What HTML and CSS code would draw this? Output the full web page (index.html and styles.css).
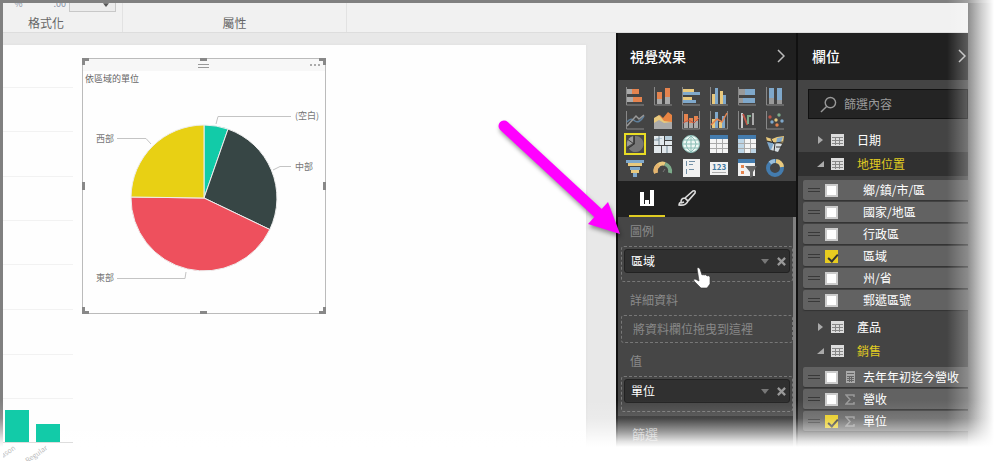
FILE: index.html
```html
<!DOCTYPE html>
<html lang="zh-Hant">
<head>
<meta charset="utf-8">
<title>視覺效果</title>
<link rel="stylesheet" href="styles.css">
</head>
<body>
<div class="window">
  <div class="app">
    <header class="ribbon">
      <section class="group group-format">
        <div class="tools"><span>%</span><span>.00</span><span class="spinner"><svg viewBox="0 0 8 6" width="6" height="5"><path d="M0 0h8L4 5z" fill="#555"/></svg></span></div>
        <div class="caption">格式化</div>
      </section>
      <section class="group group-props">
        <div class="caption">屬性</div>
      </section>
    </header>
    <div class="body">
      <main class="canvas">
        <div class="page">
          <svg class="bars" viewBox="0 0 72 416" width="72" height="416">
            <g stroke="#f2f2f2"><path d="M0 42.500H70M0 86.500H70M0 131.500H70M0 175.500H70M0 219.500H70M0 264.500H70M0 309.500H70M0 353.500H70"/></g>
            <path d="M0 397.500H70" stroke="#ddd"/>
            <path d="M2 365h24v32H2zM33 379h24v18H33z" fill="#12cba8"/>
            <g font-size="7" fill="#bbb" text-anchor="end"><text transform="translate(13 404) rotate(-35)">ason</text><text transform="translate(45 404) rotate(-35)">Regular</text></g>
          </svg>
          <article class="visual">
            <div class="visual-bar"><i class="grip"></i><button class="more" aria-label="更多選項"><svg viewBox="0 0 11 2" width="11" height="2"><path d="M0 0h2v2H0zM4 0h2v2H4zM8 0h2v2H8z" fill="#aaa"/></svg></button></div>
            <h2>依區域的單位</h2>
            <svg class="pie" viewBox="0 0 242 228" width="242" height="228">
              <g stroke="#eee" stroke-width="1">
                <path d="M121 113V40A73 73 0 0 1 145 44.100Z" fill="#12cba8"/>
                <path d="M121 113L145 44.100A73 73 0 0 1 186.800 144.500Z" fill="#374645"/>
                <path d="M121 113L186.800 144.500A73 73 0 0 1 48 112Z" fill="#ee505d"/>
                <path d="M121 113L48 112A73 73 0 0 1 121 40Z" fill="#e8d014"/>
              </g>
              <g fill="none" stroke="#c4c4c4"><path d="M133 39L135 31.500H208M190 85L197 81.500H208M34 53.500H63L68 59M34 193.500H102L103 187"/></g>
              <g font-size="9" fill="#777"><text x="212" y="34">(空白)</text><text x="212" y="85">中部</text><text x="13" y="57">西部</text><text x="13" y="196">東部</text></g>
            </svg>
            <svg class="handles" viewBox="0 0 244 256" preserveAspectRatio="none"><path fill="none" stroke="#888" stroke-width="3" d="M1.500 7V1.500H7M237 1.500h5.500V7M1.500 249v5.500H7M237 254.500h5.500V249M118 1.500h7M118 254.500h7M1.500 124v8M242.500 124v8"/></svg>
          </article>
        </div>
      </main>

      <aside class="pane viz">
        <div class="pane-head"><h1>視覺效果</h1><button aria-label="摺疊"><svg viewBox="0 0 8 14" width="8" height="14"><path d="M1 1l6 6-6 6" fill="none" stroke="#bbb" stroke-width="1.500"/></svg></button></div>
        <div class="gallery">
          <button aria-label="堆疊橫條圖"><svg viewBox="0 0 20 20"><path class="ax" d="M1.500 1v18H19"/><path fill="#aaa" d="M2 3h5v5H2zM2 11h6v5H2z"/><path fill="#e5834e" d="M7 3h7v5H7zM8 11h9v5H8z"/></svg></button>
          <button aria-label="堆疊直條圖"><svg viewBox="0 0 20 20"><path class="ax" d="M1.500 1v18H19"/><path fill="#aaa" d="M4 13h5v5H4zM12 10h5v8h-5z"/><path fill="#e5834e" d="M4 6h5v7H4zM12 2h5v9h-5z"/></svg></button>
          <button aria-label="群組橫條圖"><svg viewBox="0 0 20 20"><path class="ax" d="M1.500 1v18H19"/><path fill="#e9c97d" d="M2 3h11v3H2zM2 11h9v3H2z"/><path fill="#7fa8cb" d="M2 6h17v3H2zM2 14h13v3H2z"/></svg></button>
          <button aria-label="群組直條圖"><svg viewBox="0 0 20 20"><path class="ax" d="M1.500 1v18H19"/><path fill="#e9c97d" d="M3 8h3v10H3zM11 5h3v13h-3z"/><path fill="#7fa8cb" d="M6 2h3v16H6zM14 9h3v9h-3z"/></svg></button>
          <button aria-label="百分比橫條圖"><svg viewBox="0 0 20 20"><path class="ax" d="M1.500 1v18H19"/><path fill="#999" d="M2 3h6v6H2zM2 12h6v5H2z"/><path fill="#7fa8cb" d="M8 3h10v6H8zM6 12h12v5H6z"/></svg></button>
          <button aria-label="百分比直條圖"><svg viewBox="0 0 20 20"><path class="ax" d="M1.500 1v18H19"/><path fill="#999" d="M4 12h5v6H4zM12 14h5v4h-5z"/><path fill="#7fa8cb" d="M4 2h5v10H4zM12 2h5v12h-5z"/></svg></button>
          <button aria-label="折線圖"><svg viewBox="0 0 20 20"><path class="ax" d="M1.500 1v18H19"/><g fill="none" stroke-width="1.500"><path stroke="#5f7f9b" d="M2 12q4-5 8-1 4 3 9-5"/><path stroke="#999" d="M2 16l9-10 3 3 5-4"/></g></svg></button>
          <button aria-label="區域圖"><svg viewBox="0 0 20 20"><path fill="#e98442" d="M1 9l6-4 3 3 5-6 4 3v13H1z"/><path fill="#e9c97d" d="M1 12V8l5-3 5 6 8 1v6H1z"/><path fill="#aaa" d="M1 13l5-3 5 3 8-1v7H1z"/></svg></button>
          <button aria-label="折線與堆疊直條圖"><svg viewBox="0 0 20 20"><path class="ax" d="M1.500 1v18H18.500V1"/><path fill="#aaa" d="M3 12h4v6H3zM8 13h4v5H8zM13 11h4v7h-4z"/><path fill="#e5834e" d="M3 4h4v8H3zM8 8h4v5H8zM13 6h4v5h-4z"/><path fill="none" stroke="#bd5548" d="M2 13l6-3 5 3 5-5"/></svg></button>
          <button aria-label="折線與群組直條圖"><svg viewBox="0 0 20 20"><path class="ax" d="M1.500 1v18H18.500V1"/><path fill="#e9c97d" d="M3 9h3v9H3zM10 12h3v6h-3z"/><path fill="#7fa8cb" d="M6 2h3v16H6zM13 6h3v12h-3z"/><path fill="none" stroke="#e5834e" stroke-width="1.500" d="M2 15l6-6 5 3 5-9"/></svg></button>
          <button aria-label="瀑布圖"><svg viewBox="0 0 20 20"><path class="ax" d="M1.500 1v18H19"/><path fill="#ccc" d="M4 3h2v15H4z"/><g fill="none" stroke-width="2"><path stroke="#bd5548" d="M6 4l4 10h1"/><path stroke="#7dab8b" d="M11 14V6h3"/><path stroke="#aaa" d="M16 3v12"/></g></svg></button>
          <button aria-label="散佈圖"><svg viewBox="0 0 20 20"><path class="ax" d="M1.500 1v18H19"/><g><circle cx="5" cy="7" r="1.700" fill="#bd5548"/><circle cx="14" cy="5" r="1.700" fill="#7dab8b"/><circle cx="7" cy="12" r="1.700" fill="#7fa8cb"/><circle cx="11" cy="10" r="1.700" fill="#e9c97d"/><circle cx="17" cy="11" r="1.700" fill="#7fa8cb"/><circle cx="12" cy="15" r="1.700" fill="#e5834e"/></g></svg></button>
          <button class="selected" aria-label="圓形圖" aria-pressed="true"><svg viewBox="0 0 20 20"><path fill="#777" d="M10 10V1a9 9 0 1 1-7 14z"/><path fill="#999" d="M8 9L1 13V8q1-5 7-7z"/><path d="M9 1v9l-7 5M9 10L2 5" fill="none" stroke="#333"/></svg></button>
          <button aria-label="樹狀圖"><svg viewBox="0 0 20 20"><path fill="#e2e8ec" d="M1 2h10v9H1zM1 12h7v7H1zM9 12h10v7H9zM12 7h7v4h-7z"/><path fill="#b5cbd8" d="M12 2h7v4h-7zM3 4h6v1H3z"/><path fill="none" stroke="#778c99" d="M6 2v9M1 6h5M14 12v7"/></svg></button>
          <button aria-label="地圖"><svg viewBox="0 0 20 20"><circle cx="10" cy="10" r="8.500" fill="#eef8f4" stroke="#8abdb6"/><path fill="none" stroke="#8abdb6" d="M2 10h16M10 2v16M3 6h14M3 14h14M10 2Q0 10 10 18M10 2q10 8 0 16"/></svg></button>
          <button aria-label="資料表"><svg viewBox="0 0 20 20"><path fill="#f4f4f4" d="M1 2h18v17H1z"/><path fill="#447cae" d="M1 1h18v4H1z"/><path fill="none" stroke="#aaa" d="M1 9.500h18M1 14.500h18M7.500 5v14M13.500 5v14"/></svg></button>
          <button aria-label="矩陣"><svg viewBox="0 0 20 20"><path fill="#f4f4f4" d="M1 2h18v17H1z"/><path fill="#447cae" d="M1 1h18v4H1z"/><path fill="#bdd5e6" d="M1 5h6v14H1zM13 14h6v5h-6z"/><path fill="none" stroke="#aaa" d="M1 9.500h18M1 14.500h18M7.500 5v14M13.500 5v14"/></svg></button>
          <button aria-label="區域分布圖"><svg viewBox="0 0 20 20"><path fill="#e9c97d" d="M1 3l6 2 5-2 7-1-1 7-7 1-3-2-6-1z"/><path fill="#7fa8cb" d="M2 8l7 1 1 6-5 1zM12 4l6-1-2 5-5 2z"/><path fill="#d8dfe3" d="M9 9l8 1-4 8-7-2z"/><path fill="none" stroke="#333" d="M2 7l8 2 8-1M10 9l-1 9M6 5l3 5M11 13h6"/></svg></button>
          <button aria-label="漏斗圖"><svg viewBox="0 0 20 20"><path fill="#7fa8cb" d="M1 2h18v3H1zM5 9h10v3H5zM8 15h4v4H8z"/><path fill="#e9c97d" d="M3 5h14v3H3zM6 12h8v3H6z"/></svg></button>
          <button aria-label="量測計"><svg viewBox="0 0 20 20"><g fill="none" stroke-width="4"><path stroke="#e9c97d" d="M3 15a7 7 0 0 1 9-9"/><path stroke="#e5b46f" d="M3 15a7 7 0 0 1 3-8"/><path stroke="#7dab8b" d="M12 6a8 8 0 0 1 5 9"/></g><path d="M10 14l2-3" stroke="#777"/></svg></button>
          <button aria-label="多列卡片"><svg viewBox="0 0 20 20"><path fill="#f1f1f1" d="M2 1h17v18H2z"/><path fill="#7290a6" d="M5 3h1v5H5zM8 3h6v1H8zM8 6h4v1H8zM5 11h1v5H5zM8 11h5v1H8z"/></svg></button>
          <button aria-label="卡片"><svg viewBox="0 0 20 20"><path fill="#f1f1f1" d="M1 4h18v13H1z"/><text x="3" y="12" font-size="8" font-weight="700" fill="#3f789f">123</text><path stroke="#aaa" d="M3 14.500h14"/></svg></button>
          <button aria-label="交叉分析篩選器"><svg viewBox="0 0 20 20"><path fill="#f1f1f1" d="M1 2h17v16H1z"/><path fill="#447cae" d="M1 1h17v4H1z"/><path fill="#e5834e" d="M4 7h3v3H4zM4 13h3v3H4z"/><path fill="#666" d="M8 8h12l-4 6v4l-3 2v-6z"/></svg></button>
          <button aria-label="環圈圖"><svg viewBox="0 0 20 20"><circle cx="10" cy="10" r="7" fill="none" stroke="#447cae" stroke-width="4"/><path fill="none" stroke="#e9c97d" stroke-width="4" d="M11 3a7 7 0 0 1 6 6"/><path fill="none" stroke="#9bbfdb" stroke-width="4" d="M5 5a7 7 0 0 1 5-2"/></svg></button>
        </div>
        <div class="tabs">
          <button class="tab active" aria-label="欄位"><svg viewBox="0 0 16 16" width="16" height="16"><path fill="#fff" d="M1 2h4v14H1zM6 10h4v6H6zM11 0h4v16h-4zM1 14h14v2H1z"/></svg></button>
          <button class="tab" aria-label="格式"><svg viewBox="0 0 20 18" width="20" height="18"><path fill="none" stroke="#ddd" stroke-width="1.600" d="M8 9l8-7q3-1 2 2l-7 8zM8 9l3 3q-2 5-9 4 0-2 2-3 0-4 4-4zM4 14l3-1"/></svg></button>
        </div>
        <div class="wells">
          <h3>圖例</h3>
          <div class="well"><div class="chip"><span>區域</span><button aria-label="選單"><svg viewBox="0 0 8 5" width="8" height="5"><path d="M0 0h8L4 5z" fill="#777"/></svg></button><button aria-label="移除"><svg viewBox="0 0 10 10" width="9" height="9"><path d="M1 1l8 8M9 1L1 9" stroke="#999" stroke-width="2.500"/></svg></button></div></div>
          <h3>詳細資料</h3>
          <div class="well empty">將資料欄位拖曳到這裡</div>
          <h3>值</h3>
          <div class="well"><div class="chip"><span>單位</span><button aria-label="選單"><svg viewBox="0 0 8 5" width="8" height="5"><path d="M0 0h8L4 5z" fill="#777"/></svg></button><button aria-label="移除"><svg viewBox="0 0 10 10" width="9" height="9"><path d="M1 1l8 8M9 1L1 9" stroke="#999" stroke-width="2.500"/></svg></button></div></div>
          <h4>篩選</h4>
        </div>
      </aside>

      <aside class="pane fields">
        <div class="pane-head"><h1>欄位</h1><button aria-label="摺疊"><svg viewBox="0 0 8 14" width="8" height="14"><path d="M1 1l6 6-6 6" fill="none" stroke="#bbb" stroke-width="1.500"/></svg></button></div>
        <label class="search"><svg viewBox="0 0 18 18" width="17" height="17"><g fill="none" stroke="#999" stroke-width="1.500"><circle cx="11" cy="7" r="5.500"/><path d="M7 11l-6 6"/></g></svg><input type="search" placeholder="篩選內容" aria-label="篩選內容"></label>
        <button class="table"><svg class="tri" viewBox="0 0 7 8"><path d="M1 0l5 4-5 4z" fill="#aaa"/></svg><svg class="grid" viewBox="0 0 13 12"><path fill="#ddd" d="M0 0h13v12H0z"/><path d="M1 3.500h11M1 6.500h11M1 9.500h11M4.500 3v8M8.500 3v8" stroke="#888"/></svg>日期</button>
        <button class="table open current"><svg class="tri" viewBox="0 0 7 8"><path d="M7 1v6H0z" fill="#aaa"/></svg><svg class="grid" viewBox="0 0 13 12"><path fill="#ddd" d="M0 0h13v12H0z"/><path d="M1 3.500h11M1 6.500h11M1 9.500h11M4.500 3v8M8.500 3v8" stroke="#888"/></svg>地理位置</button>
        <div class="columns">
          <label><i></i><input type="checkbox"><b></b>鄉/鎮/市/區</label>
          <label><i></i><input type="checkbox"><b></b>國家/地區</label>
          <label><i></i><input type="checkbox"><b></b>行政區</label>
          <label><i></i><input type="checkbox" checked><b></b>區域</label>
          <label><i></i><input type="checkbox"><b></b>州/省</label>
          <label><i></i><input type="checkbox"><b></b>郵遞區號</label>
        </div>
        <button class="table"><svg class="tri" viewBox="0 0 7 8"><path d="M1 0l5 4-5 4z" fill="#aaa"/></svg><svg class="grid" viewBox="0 0 13 12"><path fill="#ddd" d="M0 0h13v12H0z"/><path d="M1 3.500h11M1 6.500h11M1 9.500h11M4.500 3v8M8.500 3v8" stroke="#888"/></svg>產品</button>
        <button class="table open"><svg class="tri" viewBox="0 0 7 8"><path d="M7 1v6H0z" fill="#aaa"/></svg><svg class="grid" viewBox="0 0 13 12"><path fill="#ddd" d="M0 0h13v12H0z"/><path d="M1 3.500h11M1 6.500h11M1 9.500h11M4.500 3v8M8.500 3v8" stroke="#888"/></svg>銷售</button>
        <div class="columns">
          <label><i></i><input type="checkbox"><b><svg viewBox="0 0 9 12" width="9" height="12"><path fill="#aaa" d="M0 0h9v12H0z"/><path stroke="#666" d="M1 2.500h7M1 5.500h7M1 7.500h7M1 9.500h7M3.500 5v6M5.500 5v6"/></svg></b>去年年初迄今營收</label>
          <label><i></i><input type="checkbox"><b><svg viewBox="0 0 10 11" width="10" height="11"><path fill="none" stroke="#999" stroke-width="1.500" d="M9 3V1H1l4 4.500L1 10h8V8"/></svg></b>營收</label>
          <label><i></i><input type="checkbox" checked><b><svg viewBox="0 0 10 11" width="10" height="11"><path fill="none" stroke="#999" stroke-width="1.500" d="M9 3V1H1l4 4.500L1 10h8V8"/></svg></b>單位</label>
        </div>
      </aside>
    </div>
  </div>
  <svg class="arrow" viewBox="0 0 136 126" width="136" height="126"><g fill="#f0f"><path d="M14 16L108 103" stroke="#f0f" stroke-width="11" stroke-linecap="round"/><path d="M130 124L118 92 98 114z"/></g></svg>
  <svg class="pointer" viewBox="0 0 18 22" width="18" height="22"><path fill="#fff" stroke="#333" stroke-width=".6" d="M4 1q2-1 3 1l2 6q1-1 2 0 2-1 3 1 2-1 3 1v7l-3 4H8L1 14q-1-2 1-2l4 2z"/></svg>
  <div class="fade fade-right"></div>
  <div class="fade fade-bottom"></div>
</div>
</body>
</html>
```
FILE: styles.css
```css
* { box-sizing: border-box; }

body {
  margin: 0;
  font-family: "Noto Sans CJK TC", "Noto Sans", sans-serif;
  font-size: 12px;
  line-height: 16px;
}

button {
  padding: 0;
  border: 0;
  background: none;
  color: inherit;
  font: inherit;
}

h1, h2, h3, h4 { margin: 0; font-weight: 400; }
svg { display: block; flex: none; }

.window {
  position: relative;
  height: 100vh;
  overflow: hidden;
  padding: 3px 29px 0 3px;
  background: linear-gradient(#808080 3px, transparent 3px), linear-gradient(to left, #656565 29px, #808080 29px);
}

.app {
  display: flex;
  flex-direction: column;
  height: 100%;
  overflow: hidden;
  background: #e8e8e8;
}

/* Ribbon */
.ribbon {
  display: flex;
  flex: none;
  height: 30px;
  background: #f1f1f1;
  border-bottom: 1px solid #ddd;
  color: #666;
  overflow: hidden;
}

.group {
  display: flex;
  flex-direction: column;
  justify-content: flex-end;
  border-right: 1px solid #e2e2e2;
  text-align: center;
}

.group-format { width: 153px; margin-left: -33px; }
.group-props { width: 224px; }
.caption { flex: none; height: 17px; }

.tools {
  display: flex;
  justify-content: flex-end;
  align-items: flex-end;
  gap: 3px;
  height: 16px;
  padding-right: 6px;
  margin-bottom: 3px;
  font-size: 9px;
  color: #8792a5;
}

.tools span:first-child { margin-right: 28px; }

.spinner {
  display: flex;
  justify-content: flex-end;
  width: 47px;
  height: 16px;
  padding: 6px 6px 0;
  border: 1px solid #c8c8c8;
  background: #ececec;
}

/* Report canvas */
.body { display: flex; flex: 1; min-height: 0; }
.canvas { flex: 1; min-width: 0; padding: 12px 30px 0 0; }

.page {
  display: flex;
  align-items: flex-start;
  gap: 7px;
  height: 100%;
  background: #fefefe;
  box-shadow: 0 0 3px #ddd;
}

.bars { position: relative; z-index: 1; }

.visual {
  position: relative;
  width: 244px;
  margin-top: 13px;
  border: 1px solid #bbb;
  background: #fefefe;
}

.visual-bar {
  display: flex;
  justify-content: flex-end;
  height: 12px;
  padding-right: 4px;
  background: #f7f7f7;
}

.grip {
  width: 11px;
  height: 4px;
  margin: 5px auto 0;
  border: solid #999;
  border-width: 1px 0;
  transform: translateX(7px);
}

.visual h2 {
  height: 14px;
  padding-left: 2px;
  font-size: 9px;
  line-height: 15px;
  color: #666;
}

.handles {
  position: absolute;
  inset: -1px;
  width: calc(100% + 2px);
  height: calc(100% + 2px);
}

/* Side panes */
.pane {
  flex: none;
  overflow: hidden;
  border-left: 2px solid #111;
  background: #444;
  color: #fff;
}

.viz { width: 180px; }
.fields { width: 172px; }

.pane-head {
  display: flex;
  justify-content: space-between;
  align-items: center;
  height: 47px;
  padding: 0 11px 2px 12px;
  background: #202020;
}

.fields .pane-head { padding-right: 2px; padding-left: 14px; }
.pane-head h1 { font-size: 14px; line-height: 20px; font-weight: 500; }

.gallery {
  display: grid;
  grid-template-columns: repeat(6, 22px);
  gap: 2px 6px;
  padding: 5px 6px 0;
  height: 101px;
  grid-auto-rows: 22px;
}

.gallery button { padding: 0; border: 1px solid transparent; }
.gallery svg { width: 20px; height: 20px; }
.gallery .selected { border: 2px solid #e8dc25; background: #4a4a4a; }
.gallery .selected svg { width: 18px; height: 18px; }
.ax { fill: none; stroke: #888; }

.tabs {
  display: flex;
  gap: 4px;
  height: 36px;
  padding: 0 11px;
  background: #202020;
}

.tab {
  display: flex;
  justify-content: center;
  align-items: center;
  width: 36px;
  border-bottom: 2px solid transparent;
}

.tab.active { border-color: #e0cc22; }

.wells {
  padding: 0 0 0 3px;
  border-right: 3px solid #808080;
  background: #464646;
}

.wells h3 {
  height: 29px;
  padding: 6px 9px 0;
  font-size: 12px;
  color: #8a8a8a;
}

.well {
  height: 36px;
  margin-bottom: 4px;
  padding: 2px;
  border: 1px dashed #777;
  border-radius: 3px;
}

.chip {
  display: flex;
  align-items: center;
  gap: 8px;
  height: 24px;
  padding: 0 3px 0 6px;
  border: 1px solid #222;
  border-radius: 3px;
  background: #303030;
}

.chip span { flex: 1; }

.well.empty {
  height: 28px;
  padding: 5px 11px;
  color: #888;
}

.wells h4 {
  height: 60px;
  margin: 0 0 0 -3px;
  padding: 10px 14px;
  background: #292929;
  color: #aaa;
  font-size: 13px;
}

.search {
  display: flex;
  align-items: center;
  gap: 7px;
  height: 30px;
  margin: 9px 0 9px 10px;
  padding-left: 11px;
  border: 1px solid #111;
  background: #242424;
}

.search input {
  min-width: 0;
  flex: 1;
  padding: 0;
  border: 0;
  background: none;
  color: #fff;
  font: inherit;
  outline: 0;
}

.search input::placeholder { color: #999; opacity: 1; }

.table {
  display: flex;
  align-items: center;
  width: 100%;
  height: 24px;
  padding-left: 19px;
}

.tri { width: 7px; height: 8px; margin-right: 7px; }
.grid { width: 13px; height: 12px; margin-right: 13px; }
.open { color: #e0cc22; }
.current { background: #303030; }

.columns {
  display: flex;
  flex-direction: column;
  gap: 2px;
  padding: 4px 0 4px 5px;
}

.columns label {
  display: flex;
  align-items: center;
  height: 20px;
  padding-left: 5px;
  border-radius: 2px 0 0 2px;
  background: #626262;
  box-shadow: 0 1px 1px #333;
  white-space: nowrap;
}

.columns i {
  width: 12px;
  height: 4px;
  margin-right: 5px;
  border: solid #393939;
  border-width: 1px 0;
}

.columns input {
  appearance: none;
  flex: none;
  width: 13px;
  height: 13px;
  margin: 0;
  border: 2px solid #ccc;
  background: #fff;
}

.columns input:checked {
  position: relative;
  border-color: #e8cc20;
  background: #e8cc20;
}

.columns input:checked::after {
  content: "";
  position: absolute;
  left: 3px;
  top: 0;
  width: 4px;
  height: 8px;
  border: solid #333;
  border-width: 0 2px 2px 0;
  transform: rotate(42deg);
}

.columns b {
  display: flex;
  justify-content: center;
  width: 25px;
  padding-right: 1px;
}

.columns + .table { margin-top: 1px; }

/* Overlays */
.arrow {
  position: absolute;
  left: 490px;
  top: 110px;
  filter: drop-shadow(1px 3px 2px #0006);
}

.pointer { position: absolute; left: 693px; top: 267px; }
.fade { position: absolute; pointer-events: none; }

.fade-right {
  inset: 0 0 0 auto;
  width: 50px;
  background: linear-gradient(to right, #fff0, #fff4 42%, #fffa 68%, #fff 94%);
}

.fade-bottom {
  inset: auto 0 0 0;
  height: 61px;
  background: linear-gradient(#fff0, #fff2 30%, #fff8 52%, #fffd 68%, #fff 77%);
}
```
